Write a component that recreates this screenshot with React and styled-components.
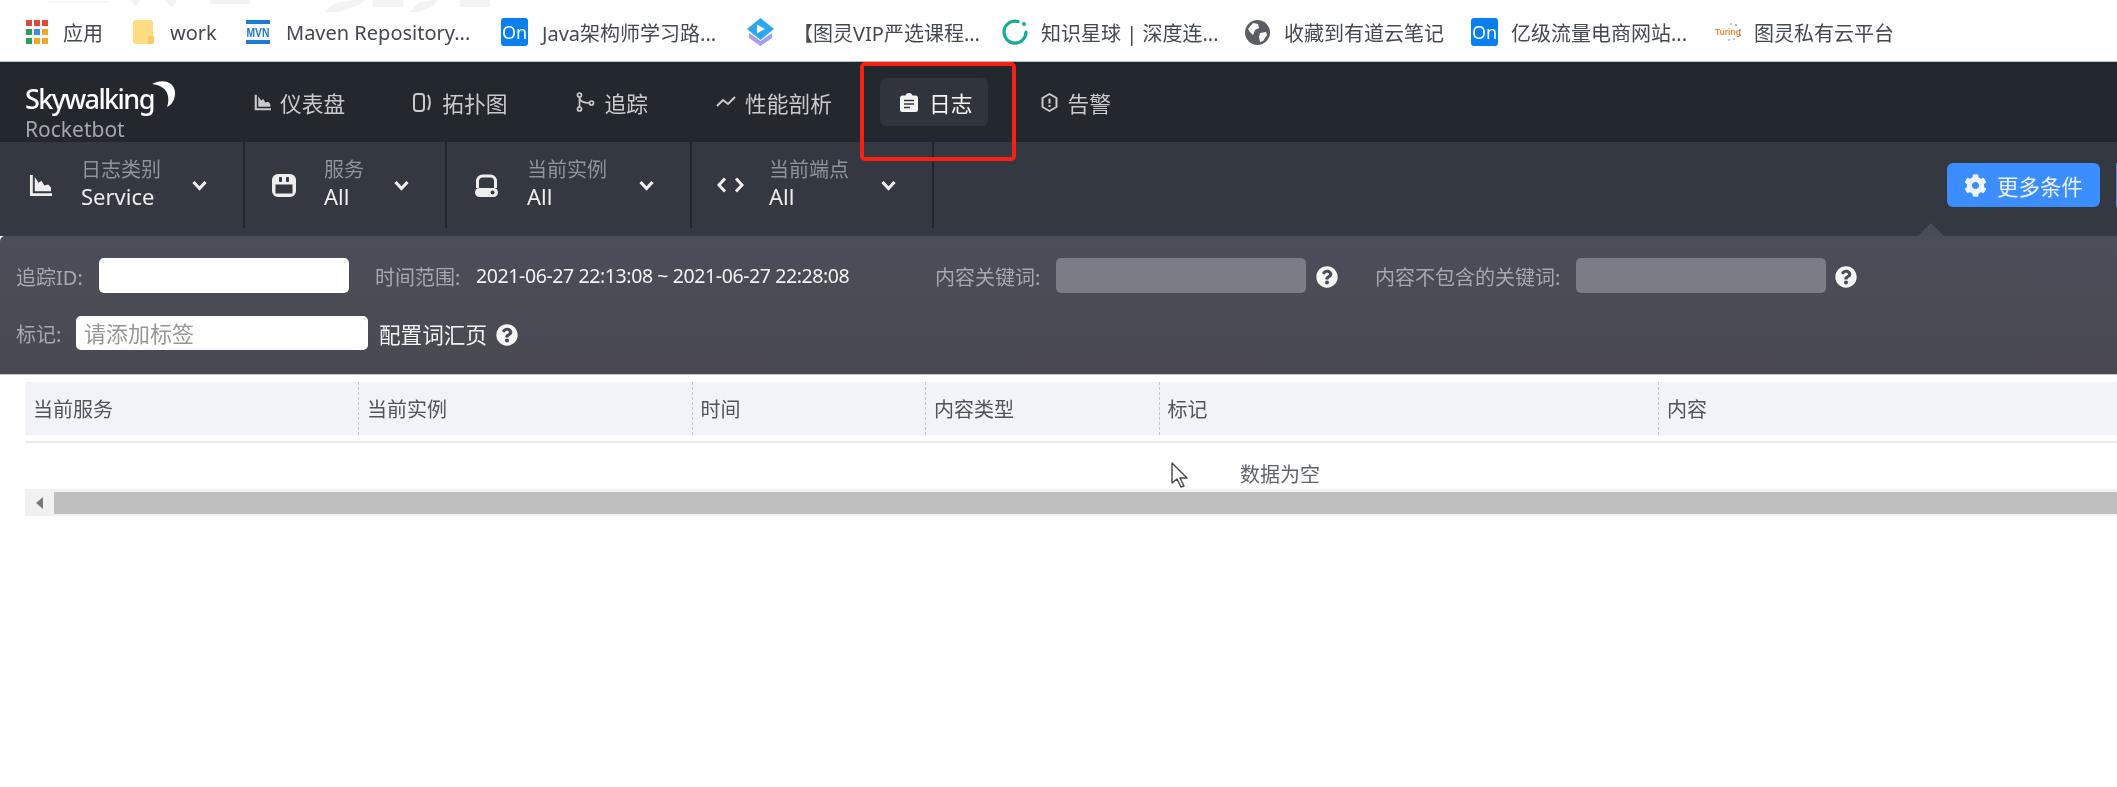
import React from 'react';
import styled, { createGlobalStyle } from 'styled-components';
import { FaCog, FaQuestionCircle } from 'react-icons/fa';

const Global = createGlobalStyle`
    html, body {
        margin : 0;
        background : #fff;
        font-family : "Noto Sans", "Noto Sans CJK SC", sans-serif;
    }
    * { box-sizing : border-box; }
`

const Page = styled('div')`
    position : relative;
    width : 2117px;
    height : 787px;
    overflow : hidden;
    background : #fff;
    filter : blur(0.35px);
`
const Marker = styled('div')`
    position : absolute;
    left : 860px;
    top : 62px;
    width : 156px;
    height : 99px;
    border : 4px solid #fb1f12;
    border-radius : 5px;
`

/* browser bookmarks */
const Chrome = styled('div')`
    position : relative;
    height : 62px;
    border-bottom : 1px solid #b9bcc0;
    background : #fff;
`
const Smudge = styled('svg')`
    position : absolute;
    left : 40px;
    top : 0;
`
const Bookmarks = styled('div')`
    display : flex;
    align-items : center;
    height : 61px;
    padding : 3px 0 0 26px;
`
const Bookmark = styled('div')`
    display : flex;
    align-items : center;
    flex : none;
    width : ${props => props.$w}px;
`
const BookmarkIcon = styled('div')`
    display : flex;
    flex : none;
    width : ${props => props.$w}px;
`
const BookmarkText = styled('span')`
    font-size : 20px;
    color : #44484f;
    white-space : nowrap;
`

/* top navigation */
const Nav = styled('div')`
    display : flex;
    align-items : center;
    gap : 33px;
    height : 80px;
    background : #23272e;
`
const Logo = styled('div')`
    position : relative;
    flex : none;
    width : 234px;
    height : 80px;
    margin-right : -33px;
    padding : 21px 0 0 25px;
`
const LogoName = styled('div')`
    font-size : 27px;
    line-height : 32px;
    font-weight : 500;
    letter-spacing : -1.6px;
    color : #fff;
`
const LogoSub = styled('div')`
    font-size : 21px;
    line-height : 24px;
    color : #a3a6ab;
    margin-top : 2px;
`
const Moon = styled('svg')`
    position : absolute;
    left : 152px;
    top : 18px;
`
const NavItem = styled('div')`
    display : flex;
    align-items : center;
    height : 48px;
    padding : 0 15px 0 20px;
    border-radius : 6px;
    background : ${props => props.$active ? '#30343d' : 'transparent'};
    color : ${props => props.$active ? '#f4f4f5' : '#c8cacd'};
    font-size : 21.75px;
`
const NavIcon = styled('span')`
    display : flex;
    flex : none;
    width : ${props => props.$w || 29}px;
`

/* selector toolbar */
const Toolbar = styled('div')`
    position : relative;
    display : flex;
    height : 94px;
    background : #333841;
`
const Group = styled('div')`
    display : flex;
    align-items : center;
    flex : none;
    width : ${props => props.$w}px;
    height : 86px;
    padding : 0 36px 0 ${props => props.$left}px;
    border-right : 2px solid #22262c;
`
const GroupIcon = styled('span')`
    display : flex;
    flex : none;
    width : 52px;
    color : #eeeeef;
`
const GroupText = styled('div')`
    display : flex;
    flex-direction : column;
    margin-top : -4px;
`
const GroupLabel = styled('span')`
    font-size : 20px;
    line-height : 26px;
    color : #8f939a;
    white-space : nowrap;
`
const GroupValue = styled('span')`
    font-size : 22px;
    line-height : 26px;
    color : #eceded;
`
const Chevron = styled('svg')`
    flex : none;
    margin-left : auto;
`
const Spacer = styled('div')`
    flex : 1;
`
const MoreButton = styled('div')`
    display : flex;
    align-items : center;
    gap : 10px;
    flex : none;
    width : 153px;
    height : 44px;
    margin : 21px 0 0 0;
    padding-left : 17px;
    border-radius : 6px;
    background : #3c8dff;
    color : #eef4ff;
    font-size : 21.5px;
`
const ClippedButton = styled('div')`
    flex : none;
    width : 1px;
    height : 44px;
    margin : 21px 0 0 16px;
    background : #3c8dff;
`
const Arrow = styled('div')`
    position : absolute;
    right : 173px;
    bottom : 0;
    width : 0;
    height : 0;
    border-left : 13px solid transparent;
    border-right : 13px solid transparent;
    border-bottom : 13px solid #484c56;
`

/* filter panel */
const Panel = styled('div')`
    display : flex;
    flex-direction : column;
    gap : 23px;
    height : 139px;
    padding : 22px 0 0 16px;
    border-radius : 5px 0 0 0;
    border-bottom : 1px solid #c4c5cf;
    background : linear-gradient(#4a4e58, #4a4952);
`
const Row = styled('div')`
    display : flex;
    align-items : center;
    height : ${props => props.$h}px;
`
const Label = styled('span')`
    flex : none;
    width : ${props => props.$w}px;
    margin-left : ${props => props.$ml || 0}px;
    margin-top : 1px;
    font-size : 20px;
    color : #a5a8ae;
    white-space : nowrap;
`
const DateText = styled('span')`
    flex : none;
    width : 459px;
    font-size : 19.5px;
    letter-spacing : -0.4px;
    color : #f2f2f3;
    white-space : nowrap;
`
const Action = styled('span')`
    flex : none;
    width : 117px;
    margin-left : 11px;
    font-size : 21.6px;
    color : #f2f2f3;
    white-space : nowrap;
`
const Field = styled('div')`
    flex : none;
    width : ${props => props.$w}px;
    height : 100%;
    padding-left : 8px;
    border-radius : 5px;
    background : ${props => props.$disabled ? '#7a7d85' : '#fff'};
    color : #969696;
    font-size : 22px;
    line-height : 34px;
`
const Help = styled('span')`
    display : flex;
    flex : none;
    margin-left : ${props => props.$ml}px;
    margin-top : 3px;
    color : #f6f6f6;
`

/* table */
const TableHead = styled('div')`
    display : grid;
    grid-template-columns : 333px 333.5px 233.5px 233.5px 499.5px 1fr;
    height : 53px;
    margin : 7px 0 0 25px;
    background : #f2f3f8;
`
const HeadCell = styled('div')`
    display : flex;
    align-items : center;
    padding-left : 8px;
    border-left : ${props => props.$first ? 'none' : '1px dashed #c3c5ca'};
    color : #50555c;
    font-size : 20px;
`
const HeadLine = styled('div')`
    height : 2px;
    margin : 6px 0 0 25px;
    background : #e8e9ec;
`
const Empty = styled('div')`
    position : relative;
    height : 46px;
    margin-left : 25px;
    padding : 19px 0 0 1215px;
    color : #5f6368;
    font-size : 20px;
    line-height : 26px;
`
const Cursor = styled('svg')`
    position : absolute;
    left : 1146px;
    top : 19px;
`
const Scrollbar = styled('div')`
    display : flex;
    height : 27px;
    margin-left : 25px;
    background : #f1f1f1;
`
const ScrollButton = styled('div')`
    display : flex;
    align-items : center;
    justify-content : center;
    flex : none;
    width : 29px;
`
const ScrollThumb = styled('div')`
    flex : 1;
    height : 22px;
    margin-top : 3px;
    background : #bfbfbf;
`

const Apps = () => (
    <svg width="22" height="24" viewBox="0 0 22 24">
        {[['#e8453c', '#e8453c', '#e8453c'], ['#2e9e5b', '#3b8bf0', '#f6a623'], ['#2e9e5b', '#f6a623', '#f6a623']].map((row, y) =>
            row.map((c, x) => <rect key={x + '-' + y} x={x * 8} y={y * 9} width="6" height="6" fill={c} />)
        )}
    </svg>
)
const Folder = () => (
    <svg width="22" height="25" viewBox="0 0 22 25">
        <rect width="20" height="24" rx="2.5" fill="#fddc84" />
        <rect x="15" y="16" width="6" height="8" rx="2" fill="#f5cb62" />
    </svg>
)
const Mvn = () => (
    <svg width="24" height="25" viewBox="0 0 24 25">
        <rect width="24" height="4" fill="#1d79d6" />
        <rect y="20" width="24" height="4" fill="#1d79d6" />
        <text x="12" y="16.500" textAnchor="middle" fontSize="12" fontWeight="800" textLength="23" lengthAdjust="spacingAndGlyphs" fontFamily="Liberation Sans, sans-serif" fill="#1d79d6">MVN</text>
    </svg>
)
const On = () => (
    <svg width="27" height="28" viewBox="0 0 27 28">
        <rect width="27" height="28" rx="3" fill="#0a7ff2" />
        <text x="13.5" y="20.5" textAnchor="middle" fontSize="18" fontFamily="Noto Sans, sans-serif" fill="#fff">On</text>
    </svg>
)
const Diamond = () => (
    <svg width="27" height="28" viewBox="0 0 27 28">
        <path d="M2 15l11.500 8L25 15v5l-11.500 8L2 20z" fill="#a89bf0" />
        <path d="M13.500 0L27 11 13.500 22 0 11z" fill="#28a8ee" />
        <path d="M10 6.500l8 4.500-8 4.500z" fill="#fff" />
    </svg>
)
const Ring = () => (
    <svg width="28" height="28" viewBox="0 0 28 28">
        <path d="M17 3.500A11 11 0 1 0 25 14" fill="none" stroke="#16ab92" strokeWidth="3.200" strokeLinecap="round" />
        <circle cx="23" cy="6" r="2" fill="#16ab92" />
    </svg>
)
const Globe = () => (
    <svg width="25" height="25" viewBox="0 0 25 25">
        <circle cx="12.500" cy="12.500" r="12.500" fill="#5a5d62" />
        <path d="M8 3l5 1 1 4-4 2-2 5-3-3-2-3zM15 13l6-1 1 3-4 6-3 1-1-5z" fill="#fff" />
    </svg>
)
const Turing = () => (
    <svg width="27" height="22" viewBox="0 0 27 22">
        <text x="0" y="14" fontSize="8.500" fontWeight="700" fontFamily="Liberation Sans, sans-serif" fill="#ee8a3c">Turing</text>
        <circle cx="16" cy="3" r="1" fill="#e89a9a" />
        <circle cx="21" cy="4" r="1" fill="#9a9ac8" />
        <circle cx="25" cy="9" r="1" fill="#7a8aa8" />
        <circle cx="25" cy="14" r="1" fill="#7a8aa8" />
        <circle cx="19" cy="18" r="1" fill="#8ac0e8" />
        <circle cx="14" cy="19" r="1" fill="#8ac0e8" />
    </svg>
)

const ChartIcon = ({ size }) => (
    <svg width={size} height={size} viewBox="0 0 24 24" fill="currentColor">
        <path d="M1 1h3v19h20v3H1z" />
        <path d="M6 3l4 6 3-2 3 5 4-1 3 3v4H6z" />
    </svg>
)
const TopoIcon = () => (
    <svg width="19" height="19" viewBox="0 0 19 19" fill="none" stroke="currentColor" strokeWidth="2">
        <rect x="1" y="1" width="10" height="17" rx="3" />
        <path d="M15 2c2.500 4 2.500 11 0 15" />
    </svg>
)
const TraceIcon = () => (
    <svg width="19" height="20" viewBox="0 0 19 20" fill="none" stroke="currentColor" strokeWidth="1.700">
        <circle cx="3.500" cy="3" r="2" />
        <circle cx="3.500" cy="17" r="2" />
        <circle cx="15.500" cy="11" r="2" />
        <path d="M3.500 5v10M3.500 6c1 4 5 5 10 5" />
    </svg>
)
const PerfIcon = () => (
    <svg width="20" height="12" viewBox="0 0 20 12" fill="none" stroke="currentColor" strokeWidth="2">
        <path d="M1 10l6-6 5 4 7-7" />
    </svg>
)
const LogIcon = () => (
    <svg width="18" height="19" viewBox="0 0 18 19">
        <path d="M2.500 2.500H5.500C6 1 7 0 9 0s3 1 3.500 2.500h3A2.500 2.500 0 0 1 18 5v11.500a2.500 2.500 0 0 1-2.500 2.500h-13A2.500 2.500 0 0 1 0 16.500V5a2.500 2.500 0 0 1 2.500-2.500z" fill="#f4f4f5" />
        <path d="M4 7.500h10M4 11h10M4 14.500h6" stroke="#30343d" strokeWidth="1.700" />
    </svg>
)
const AlertIcon = () => (
    <svg width="17" height="19" viewBox="0 0 17 19" fill="none" stroke="currentColor" strokeWidth="2">
        <path d="M8.500 1l7 4v9l-7 4-7-4V5z" strokeLinejoin="round" />
        <path d="M8.500 5.500v5M8.500 12v2" />
    </svg>
)
const ServiceIcon = () => (
    <svg width="24" height="23" viewBox="0 0 24 23">
        <rect width="24" height="23" rx="6" fill="#eeeeef" />
        <rect x="7" y="3" width="3" height="5" rx="1" fill="#333841" />
        <rect x="14" y="3" width="3" height="5" rx="1" fill="#333841" />
        <rect x="3.500" y="10.500" width="17" height="9" fill="#333841" />
    </svg>
)
const InstanceIcon = () => (
    <svg width="23" height="23" viewBox="0 0 23 23">
        <path d="M2.500 14V7a5 5 0 0 1 5-5h8a5 5 0 0 1 5 5v7" fill="none" stroke="#eeeeef" strokeWidth="3" />
        <rect y="14" width="23" height="9" rx="4.500" fill="#eeeeef" />
        <circle cx="17.500" cy="18.500" r="2" fill="#333841" />
    </svg>
)
const EndpointIcon = () => (
    <svg width="27" height="16" viewBox="0 0 27 16" fill="none" stroke="#eeeeef" strokeWidth="3">
        <path d="M8 1.500L2 8l6 6.500M19 1.500L25 8l-6 6.500" />
    </svg>
)
const Down = () => (
    <Chevron width="15" height="11" viewBox="0 0 15 11" fill="none" stroke="#eeeeef" strokeWidth="3.200">
        <path d="M1.500 2l6 6.500 6-6.500" />
    </Chevron>
)

const bookmarks = [
    { w : 107, iw : 37, icon : <Apps />, text : '应用' },
    { w : 113, iw : 37, icon : <Folder />, text : 'work' },
    { w : 255, iw : 40, icon : <Mvn />, text : 'Maven Repository...' },
    { w : 246, iw : 41, icon : <On />, text : 'Java架构师学习路...' },
    { w : 254, iw : 46, icon : <Diamond />, text : '【图灵VIP严选课程...' },
    { w : 244, iw : 40, icon : <Ring />, text : '知识星球 | 深度连...' },
    { w : 226, iw : 39, icon : <Globe />, text : '收藏到有道云笔记' },
    { w : 244, iw : 40, icon : <On />, text : '亿级流量电商网站...' },
    { w : 200, iw : 39, icon : <Turing />, text : '图灵私有云平台' },
]

const navItems = [
    { w : 26, icon : <ChartIcon size={17} />, text : '仪表盘' },
    { icon : <TopoIcon />, text : '拓扑图' },
    { icon : <TraceIcon />, text : '追踪' },
    { icon : <PerfIcon />, text : '性能剖析' },
    { icon : <LogIcon />, text : '日志', active : true },
    { w : 27, icon : <AlertIcon />, text : '告警' },
]

const groups = [
    { w : 245, left : 29, icon : <ChartIcon size={23} />, label : '日志类别', value : 'Service' },
    { w : 202, left : 27, icon : <ServiceIcon />, label : '服务', value : 'All' },
    { w : 245, left : 28, icon : <InstanceIcon />, label : '当前实例', value : 'All' },
    { w : 242, left : 25, icon : <EndpointIcon />, label : '当前端点', value : 'All' },
]

const columns = ['当前服务', '当前实例', '时间', '内容类型', '标记', '内容']

class App extends React.Component{
    render(){
        return(
            <Page>
                <Global />
                <Chrome>
                    <Smudge width="460" height="13" viewBox="0 0 460 13" fill="#f3f3f3">
                        <rect x="8" y="1" width="60" height="1.500" />
                        <path d="M285 12l10-9 20-3h10l-6 5-20 7zM370 12l8-9 14-3h6l-5 6-15 6z" />
                        <rect x="333" y="0" width="30" height="7" />
                        <rect x="420" y="0" width="30" height="7" />
                        <path d="M90 0h10l-4 6zM125 0h12l-5 7zM170 0h40v4h-40z" />
                    </Smudge>
                    <Bookmarks>
                        {bookmarks.map((b, i) => (
                            <Bookmark key={i} $w={b.w}>
                                <BookmarkIcon $w={b.iw}>{b.icon}</BookmarkIcon>
                                <BookmarkText>{b.text}</BookmarkText>
                            </Bookmark>
                        ))}
                    </Bookmarks>
                </Chrome>

                <Nav>
                    <Logo>
                        <LogoName>Skywalking</LogoName>
                        <LogoSub>Rocketbot</LogoSub>
                        <Moon width="24" height="28" viewBox="0 0 24 28">
                            <path d="M0 4C8-1 22 0 23 12c.5 7-3 13-8 15 3-9 2-21-15-23z" fill="#fff" />
                        </Moon>
                    </Logo>
                    {navItems.map((n, i) => (
                        <NavItem key={i} $active={n.active}>
                            <NavIcon $w={n.w}>{n.icon}</NavIcon>
                            {n.text}
                        </NavItem>
                    ))}
                </Nav>

                <Toolbar>
                    {groups.map((g, i) => (
                        <Group key={i} $w={g.w} $left={g.left}>
                            <GroupIcon>{g.icon}</GroupIcon>
                            <GroupText>
                                <GroupLabel>{g.label}</GroupLabel>
                                <GroupValue>{g.value}</GroupValue>
                            </GroupText>
                            <Down />
                        </Group>
                    ))}
                    <Spacer />
                    <MoreButton><FaCog size={23} />更多条件</MoreButton>
                    <ClippedButton />
                    <Arrow />
                </Toolbar>

                <Panel>
                    <Row $h={35}>
                        <Label $w={83}>追踪ID:</Label>
                        <Field $w={250} />
                        <Label $w={101} $ml={26}>时间范围:</Label>
                        <DateText>2021-06-27 22:13:08 ~ 2021-06-27 22:28:08</DateText>
                        <Label $w={121}>内容关键词:</Label>
                        <Field $w={250} $disabled />
                        <Help $ml={10}><FaQuestionCircle size={22} /></Help>
                        <Label $w={201} $ml={37}>内容不包含的关键词:</Label>
                        <Field $w={250} $disabled />
                        <Help $ml={9}><FaQuestionCircle size={22} /></Help>
                    </Row>
                    <Row $h={34}>
                        <Label $w={60}>标记:</Label>
                        <Field $w={292}>请添加标签</Field>
                        <Action>配置词汇页</Action>
                        <Help $ml={0}><FaQuestionCircle size={22} /></Help>
                    </Row>
                </Panel>

                <TableHead>
                    {columns.map((c, i) => <HeadCell key={i} $first={i === 0}>{c}</HeadCell>)}
                </TableHead>
                <HeadLine />
                <Empty>
                    数据为空
                    <Cursor width="18" height="27" viewBox="0 0 18 27">
                        <path d="M1 1v20l5-4 4 8 3-1-4-8h7z" fill="#fff" stroke="#44474c" strokeWidth="1.400" strokeLinejoin="round" />
                    </Cursor>
                </Empty>
                <Scrollbar>
                    <ScrollButton>
                        <svg width="8" height="12" viewBox="0 0 8 12"><path d="M7 0v12L0 6z" fill="#787878" /></svg>
                    </ScrollButton>
                    <ScrollThumb />
                </Scrollbar>

                <Marker />
            </Page>
        )
    }
}

export default App
